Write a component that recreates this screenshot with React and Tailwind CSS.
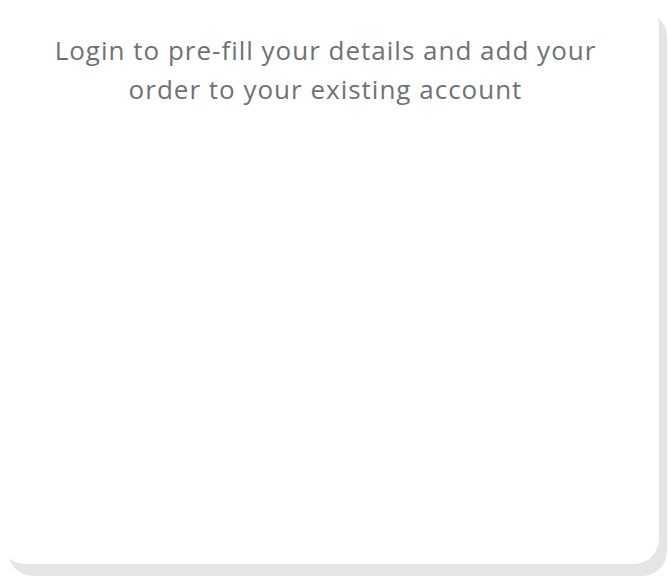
export default function App() {
    return (
        <div className="w-[668px] h-[576px] bg-white overflow-hidden">
            <div className="w-[659px] h-[564px] bg-white rounded-[25px] shadow-[8px_12px_0_#e5e5e5] pt-[31px] pl-[44px] pr-[52px]">
                <p className="text-center text-[26px] leading-[39px] tracking-[1px] text-[#6e7275] font-['Open_Sans',sans-serif]">
                    Login to pre-fill your details and add your order to your existing account
                </p>
            </div>
        </div>
    );
}
